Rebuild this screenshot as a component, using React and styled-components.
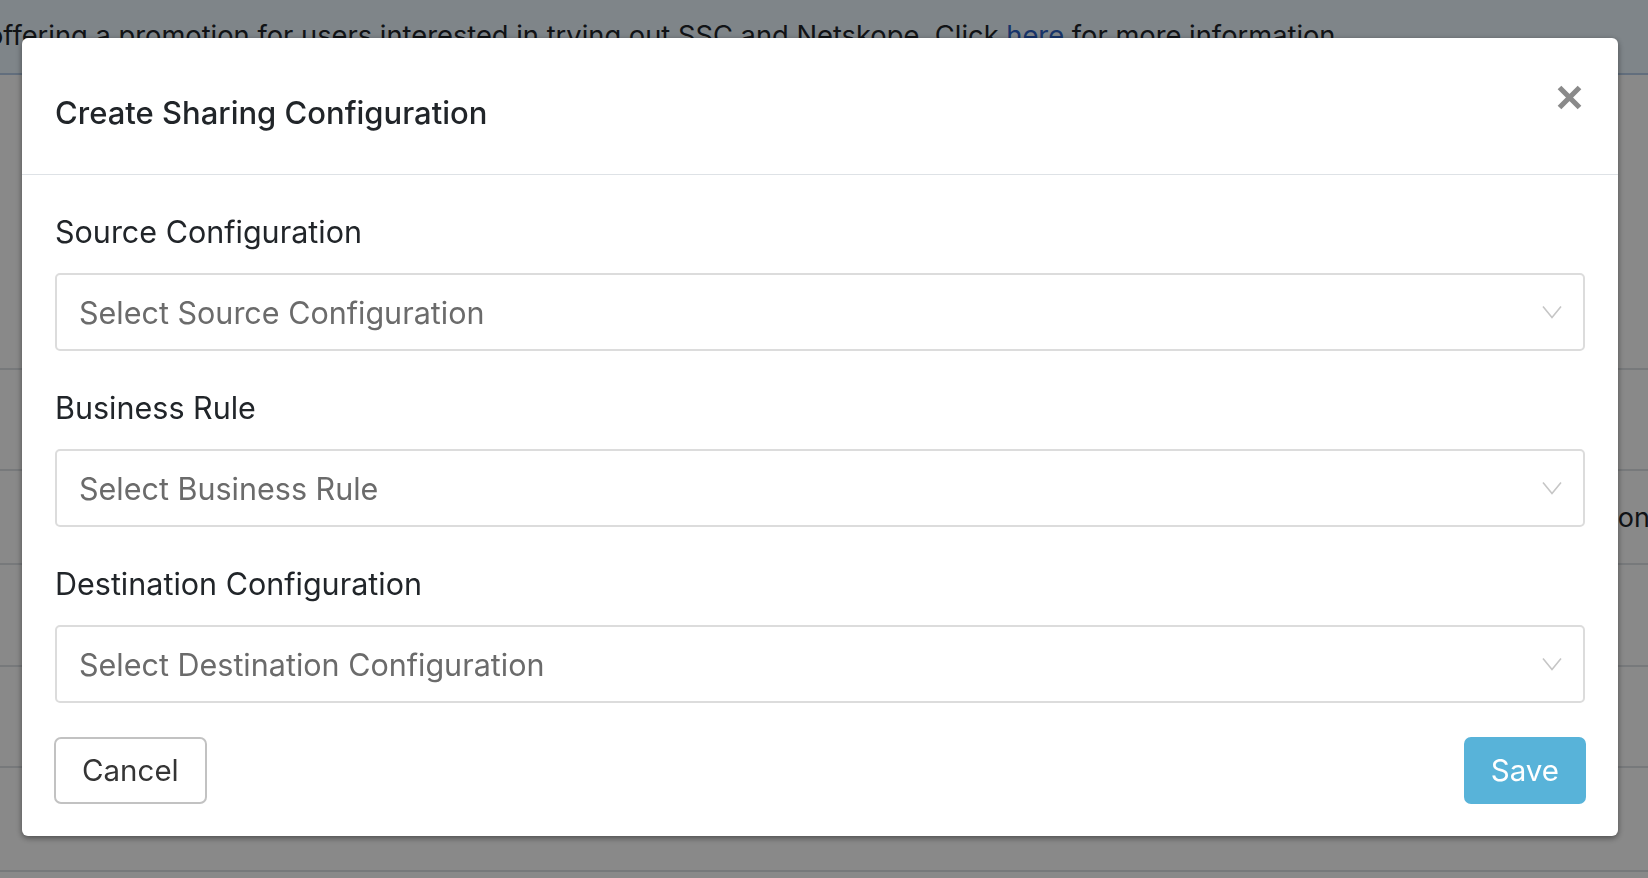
import React from "react";
import styled, { createGlobalStyle } from "styled-components";

const GlobalStyle = createGlobalStyle`
  html, body { margin: 0; padding: 0; }
  body {
    width: 1648px;
    height: 878px;
    overflow: hidden;
    background: #ffffff;
    font-family: Inter, "Noto Sans", "Liberation Sans", sans-serif;
    color: #212529;
  }
  * { box-sizing: border-box; }
`;

const Page = styled.div`
  width: 1648px;
  height: 878px;
  overflow: hidden;
`;

const Banner = styled.div`
  height: 75px;
  background: rgb(236, 247, 255);
  border-bottom: 2px solid #b6cde8;
  padding-top: 17px;
  white-space: nowrap;
  overflow: hidden;
  font-size: 27.3px;
  line-height: 38px;
  color: #212529;
  text-indent: -13px;
`;

const BannerLink = styled.a`
  color: #2d62c4;
  text-decoration: none;
`;

const Table = styled.div`
  padding-top: 293px;
`;

const TableRow = styled.div`
  display: grid;
  grid-template-columns: 1598px 1fr;
  align-items: center;
  height: ${(p) => p.$h}px;
  border-top: 2px solid #dee2e6;
  font-size: 27px;
  white-space: nowrap;
  overflow: hidden;
`;

const Cell = styled.div`
  overflow: visible;
`;

const Backdrop = styled.div`
  position: fixed;
  inset: 0;
  background: rgba(0, 0, 0, 0.463);
  display: flex;
  align-items: flex-start;
  padding: 38px 30px 0 22px;
`;

const Modal = styled.div`
  width: 1596px;
  background: #ffffff;
  border-radius: 6px;
  box-shadow: 0 2px 6px rgba(0, 0, 0, 0.45);
  display: flex;
  flex-direction: column;
`;

const Header = styled.div`
  display: flex;
  align-items: flex-start;
  padding: 54px 33px 40px 33px;
  border-bottom: 1px solid #dee2e6;
`;

const Title = styled.h5`
  margin: 0;
  font-size: 31px;
  line-height: 42px;
  font-weight: 500;
  color: #212529;
`;

const CloseButton = styled.button`
  margin: -7px 3px 0 auto;
  padding: 0;
  border: 0;
  background: transparent;
  width: 25px;
  height: 25px;
  display: flex;
  cursor: pointer;
`;

const Body = styled.div`
  padding: 36px 33px 0 33px;
`;

const Group = styled.div`
  margin-bottom: ${(p) => (p.$last ? 0 : 36)}px;
`;

const Label = styled.label`
  display: block;
  font-size: 30.5px;
  line-height: 42px;
  color: #212529;
  margin-bottom: 20px;
`;

const Select = styled.div`
  height: 78px;
  border: 2px solid #dcdcdc;
  border-radius: 5px;
  display: flex;
  align-items: center;
  padding: 0 21px 0 22px;
  font-size: 30.5px;
  color: #6b6b6b;
`;

const Placeholder = styled.span`
  flex: 1;
`;

const Footer = styled.div`
  display: flex;
  justify-content: space-between;
  align-items: center;
  padding: 34px 32px 32px 32px;
`;

const Button = styled.button`
  height: 67px;
  padding: 0 ${(p) => (p.$primary ? 25 : 26)}px;
  border-radius: 7px;
  font-family: inherit;
  font-size: 29.5px;
  line-height: 1;
  cursor: pointer;
  border: 2px solid ${(p) => (p.$primary ? "#58b3d9" : "#c2c2c2")};
  background: ${(p) => (p.$primary ? "#58b3d9" : "#ffffff")};
  color: ${(p) => (p.$primary ? "#ffffff" : "#353535")};
`;

const Chevron = () => (
  <svg width="20" height="14" viewBox="0 0 20 14" fill="none">
    <path d="M1 1.5 L10 12.5 L19 1.5" stroke="#c6c6c6" strokeWidth="1.6" />
  </svg>
);

const CloseIcon = () => (
  <svg width="25" height="25" viewBox="0 0 25 25">
    <path d="M2.5 2.5 L22.5 22.5 M22.5 2.5 L2.5 22.5" stroke="#8a8a8a" strokeWidth="5.2" strokeLinecap="butt" />
  </svg>
);

const fields = [
  { label: "Source Configuration", placeholder: "Select Source Configuration" },
  { label: "Business Rule", placeholder: "Select Business Rule" },
  { label: "Destination Configuration", placeholder: "Select Destination Configuration" },
];

const rows = [
  { h: 101, text: "" },
  { h: 94, text: "Configuration" },
  { h: 102, text: "" },
  { h: 101, text: "" },
  { h: 104, text: "" },
  { h: 60, text: "" },
];

export default function App() {
  return (
    <Page>
      <GlobalStyle />
      <Banner>
        offering a promotion for users interested in trying out SSC and Netskope. Click{" "}
        <BannerLink href="#">here</BannerLink> for more information.
      </Banner>
      <Table>
        {rows.map((r, i) => (
          <TableRow key={i} $h={r.h}>
            <Cell />
            <Cell>{r.text}</Cell>
          </TableRow>
        ))}
      </Table>
      <Backdrop>
        <Modal>
          <Header>
            <Title>Create Sharing Configuration</Title>
            <CloseButton aria-label="Close">
              <CloseIcon />
            </CloseButton>
          </Header>
          <Body>
            {fields.map((f, i) => (
              <Group key={f.label} $last={i === fields.length - 1}>
                <Label>{f.label}</Label>
                <Select>
                  <Placeholder>{f.placeholder}</Placeholder>
                  <Chevron />
                </Select>
              </Group>
            ))}
          </Body>
          <Footer>
            <Button>Cancel</Button>
            <Button $primary>Save</Button>
          </Footer>
        </Modal>
      </Backdrop>
    </Page>
  );
}
